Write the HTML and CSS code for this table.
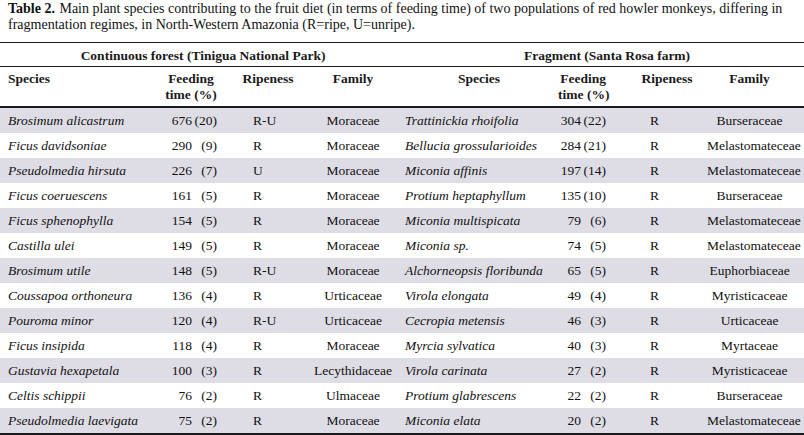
FILE: index.html
```html
<!DOCTYPE html>
<html>
<head>
<meta charset="utf-8">
<link rel="stylesheet" href="styles.css">
</head>
<body>
<div class="caption"><b class="lead">Table 2.</b> Main plant species contributing to the fruit diet (in terms of feeding time) of two populations of red howler monkeys, differing in fragmentation regimes, in North-Western Amazonia (R=ripe, U=unripe).</div>
<table class="tbl">
  <colgroup>
    <col class="c-ls"><col class="c-lf"><col class="c-lr"><col class="c-lfa">
    <col class="c-rs"><col class="c-rf"><col class="c-rr"><col class="c-rfa">
  </colgroup>
  <thead>
    <tr class="grp">
      <th colspan="4" class="g-l">Continuous forest (Tinigua National Park)</th>
      <th colspan="4" class="g-r">Fragment (Santa Rosa farm)</th>
    </tr>
    <tr class="hdr">
      <th class="h-ls">Species</th>
      <th class="h-lf">Feeding<br>time (%)</th>
      <th class="h-rip">Ripeness</th>
      <th class="h-fam">Family</th>
      <th class="h-rs">Species</th>
      <th class="h-rf">Feeding<br>time (%)</th>
      <th class="h-rip">Ripeness</th>
      <th class="h-rfam">Family</th>
    </tr>
  </thead>
  <tbody>
    <tr class="odd"><td class="ls">Brosimum alicastrum</td><td class="lf"><span class="n">676</span><span class="p">(20)</span></td><td class="rip">R-U</td><td class="fam">Moraceae</td><td class="rs">Trattinickia rhoifolia</td><td class="rf"><span class="n">304</span><span class="p">(22)</span></td><td class="rip">R</td><td class="rfam">Burseraceae</td></tr>
    <tr><td class="ls">Ficus davidsoniae</td><td class="lf"><span class="n">290</span><span class="p">(9)</span></td><td class="rip">R</td><td class="fam">Moraceae</td><td class="rs">Bellucia grossularioides</td><td class="rf"><span class="n">284</span><span class="p">(21)</span></td><td class="rip">R</td><td class="rfam">Melastomateceae</td></tr>
    <tr class="odd"><td class="ls">Pseudolmedia hirsuta</td><td class="lf"><span class="n">226</span><span class="p">(7)</span></td><td class="rip">U</td><td class="fam">Moraceae</td><td class="rs">Miconia affinis</td><td class="rf"><span class="n">197</span><span class="p">(14)</span></td><td class="rip">R</td><td class="rfam">Melastomateceae</td></tr>
    <tr><td class="ls">Ficus coeruescens</td><td class="lf"><span class="n">161</span><span class="p">(5)</span></td><td class="rip">R</td><td class="fam">Moraceae</td><td class="rs">Protium heptaphyllum</td><td class="rf"><span class="n">135</span><span class="p">(10)</span></td><td class="rip">R</td><td class="rfam">Burseraceae</td></tr>
    <tr class="odd"><td class="ls">Ficus sphenophylla</td><td class="lf"><span class="n">154</span><span class="p">(5)</span></td><td class="rip">R</td><td class="fam">Moraceae</td><td class="rs">Miconia multispicata</td><td class="rf"><span class="n">79</span><span class="p">(6)</span></td><td class="rip">R</td><td class="rfam">Melastomateceae</td></tr>
    <tr><td class="ls">Castilla ulei</td><td class="lf"><span class="n">149</span><span class="p">(5)</span></td><td class="rip">R</td><td class="fam">Moraceae</td><td class="rs">Miconia sp.</td><td class="rf"><span class="n">74</span><span class="p">(5)</span></td><td class="rip">R</td><td class="rfam">Melastomateceae</td></tr>
    <tr class="odd"><td class="ls">Brosimum utile</td><td class="lf"><span class="n">148</span><span class="p">(5)</span></td><td class="rip">R-U</td><td class="fam">Moraceae</td><td class="rs">Alchorneopsis floribunda</td><td class="rf"><span class="n">65</span><span class="p">(5)</span></td><td class="rip">R</td><td class="rfam">Euphorbiaceae</td></tr>
    <tr><td class="ls">Coussapoa orthoneura</td><td class="lf"><span class="n">136</span><span class="p">(4)</span></td><td class="rip">R</td><td class="fam">Urticaceae</td><td class="rs">Virola elongata</td><td class="rf"><span class="n">49</span><span class="p">(4)</span></td><td class="rip">R</td><td class="rfam">Myristicaceae</td></tr>
    <tr class="odd"><td class="ls">Pouroma minor</td><td class="lf"><span class="n">120</span><span class="p">(4)</span></td><td class="rip">R-U</td><td class="fam">Urticaceae</td><td class="rs">Cecropia metensis</td><td class="rf"><span class="n">46</span><span class="p">(3)</span></td><td class="rip">R</td><td class="rfam">Urticaceae</td></tr>
    <tr><td class="ls">Ficus insipida</td><td class="lf"><span class="n">118</span><span class="p">(4)</span></td><td class="rip">R</td><td class="fam">Moraceae</td><td class="rs">Myrcia sylvatica</td><td class="rf"><span class="n">40</span><span class="p">(3)</span></td><td class="rip">R</td><td class="rfam">Myrtaceae</td></tr>
    <tr class="odd"><td class="ls">Gustavia hexapetala</td><td class="lf"><span class="n">100</span><span class="p">(3)</span></td><td class="rip">R</td><td class="fam">Lecythidaceae</td><td class="rs">Virola carinata</td><td class="rf"><span class="n">27</span><span class="p">(2)</span></td><td class="rip">R</td><td class="rfam">Myristicaceae</td></tr>
    <tr><td class="ls">Celtis schippii</td><td class="lf"><span class="n">76</span><span class="p">(2)</span></td><td class="rip">R</td><td class="fam">Ulmaceae</td><td class="rs">Protium glabrescens</td><td class="rf"><span class="n">22</span><span class="p">(2)</span></td><td class="rip">R</td><td class="rfam">Burseraceae</td></tr>
    <tr class="odd"><td class="ls">Pseudolmedia laevigata</td><td class="lf"><span class="n">75</span><span class="p">(2)</span></td><td class="rip">R</td><td class="fam">Moraceae</td><td class="rs">Miconia elata</td><td class="rf"><span class="n">20</span><span class="p">(2)</span></td><td class="rip">R</td><td class="rfam">Melastomateceae</td></tr>
  </tbody>
</table>
</body>
</html>
```

FILE: styles.css
```css
html, body {
  margin: 0;
  padding: 0;
  background: #ffffff;
}
body {
  width: 804px;
  font-family: "Liberation Serif", "Times New Roman", serif;
  font-size: 13.5px;
  color: #111111;
}
.caption {
  padding: 1px 8px 0 8px;
  line-height: 16px;
  height: 42px;
  box-sizing: border-box;
  font-size: 14px;
}
.caption .lead {
  font-weight: bold;
  margin-right: 1px;
}
.tbl {
  width: 804px;
  border-collapse: collapse;
  table-layout: fixed;
  border-top: 1px solid #1a1a1a;
  border-bottom: 2px solid #1a1a1a;
  font-family: "Liberation Serif", "Times New Roman", serif;
  font-size: 13.5px;
}
.c-ls { width: 160px; }
.c-lf { width: 70px; }
.c-lr { width: 76px; }
.c-lfa { width: 94px; }
.c-rs { width: 158px; }
.c-rf { width: 69px; }
.c-rr { width: 80px; }
.c-rfa { width: 97px; }

.tbl th,
.tbl td {
  padding: 0;
  white-space: nowrap;
  font-family: "Liberation Serif", "Times New Roman", serif;
}
.tbl th {
  font-size: 13.5px;
  font-weight: bold;
  color: #1a1a1a;
}
.tbl .grp th {
  height: 21px;
  text-align: center;
  vertical-align: middle;
  border-bottom: 1px solid #1a1a1a;
  padding-top: 2px;
}
.tbl .grp .g-l {
  padding-left: 6px;
}
.tbl .grp .g-r {
  padding-left: 10px;
}
.tbl .hdr th {
  height: 35px;
  vertical-align: top;
  line-height: 16px;
  padding-top: 4px;
  text-align: center;
  border-bottom: 2px solid #1a1a1a;
}
.tbl .hdr .h-ls {
  text-align: left;
  padding-left: 8px;
}
.tbl .hdr .h-lf {
  padding-right: 8px;
}
.tbl .hdr .h-rf {
  padding-right: 19px;
}
.tbl .hdr .h-rfam {
  padding-right: 12px;
}
.tbl td {
  height: 25px;
  vertical-align: middle;
}
.tbl .odd td {
  background: #dedce4;
}
.tbl td.ls {
  padding-left: 8px;
  font-style: italic;
}
.tbl td.rs {
  padding-left: 5px;
  font-style: italic;
}
.n, .p {
  display: inline-block;
  text-align: right;
}
.lf .n { width: 32px; }
.rf .n { width: 23px; }
.p { width: 25px; }
.tbl td.rip {
  padding-left: 23px;
}
.tbl td.fam {
  text-align: center;
}
.tbl td.rfam {
  text-align: center;
  padding-right: 12px;
}
```
